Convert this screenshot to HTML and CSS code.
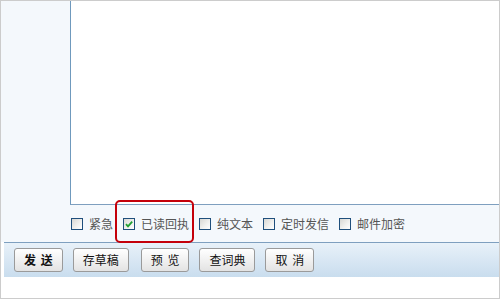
FILE: index.html
```html
<!DOCTYPE html>
<html lang="zh-CN">
<head>
<meta charset="utf-8">
<link rel="stylesheet" href="styles.css">
</head>
<body>
<div class="frame">
  <div class="compose">
    <div class="editor-row">
      <div class="editor"></div>
    </div>
    <div class="options">
      <label class="opt"><span class="box"></span><span class="txt">紧急</span></label>
      <label class="opt"><span class="box checked"><svg viewBox="0 0 12 12" width="12" height="12"><path d="M3 6.2 L5 8.3 L9.2 3.6" fill="none" stroke="#22a033" stroke-width="1.8"/></svg></span><span class="txt">已读回执</span></label>
      <label class="opt"><span class="box"></span><span class="txt">纯文本</span></label>
      <label class="opt"><span class="box"></span><span class="txt">定时发信</span></label>
      <label class="opt"><span class="box"></span><span class="txt">邮件加密</span></label>
    </div>
    <div class="highlight"></div>
  </div>
  <div class="toolbar">
    <button class="btn primary">发 送</button>
    <button class="btn">存草稿</button>
    <button class="btn wide-gap">预 览</button>
    <button class="btn">查词典</button>
    <button class="btn">取 消</button>
  </div>
  <div class="footer"></div>
</div>
</body>
</html>
```

FILE: styles.css
```css
html, body {
  margin: 0;
  padding: 0;
  background: #ffffff;
}
body {
  width: 500px;
  height: 300px;
  overflow: hidden;
  font-family: "Noto Sans CJK SC", "Noto Sans", sans-serif;
}
.frame {
  width: 498px;
  height: 297px;
  border: 1px solid #cccccc;
  display: flex;
  flex-direction: column;
  background: #ffffff;
}
.compose {
  position: relative;
  background: #f4f8fc;
  display: flex;
  flex-direction: column;
}
.editor-row {
  height: 204px;
  padding-left: 69px;
  display: flex;
}
.editor {
  flex: 1;
  background: #ffffff;
  border-left: 1px solid #6f99bd;
  border-bottom: 1px solid #7e9fbf;
}
.options {
  height: 37px;
  padding-left: 70px;
  display: flex;
  align-items: center;
  gap: 10px;
}
.opt {
  display: flex;
  align-items: center;
  gap: 6px;
  font-size: 12px;
  color: #555555;
  line-height: 14px;
}
.box {
  width: 10px;
  height: 10px;
  border: 1px solid #1f4f7c;
  background: linear-gradient(135deg, #d8d8d4 0%, #f2f2f0 60%, #ffffff 100%);
  display: flex;
  align-items: center;
  justify-content: center;
  overflow: hidden;
}
.box svg {
  flex: none;
  margin: -1px;
}
.highlight {
  position: absolute;
  left: 114px;
  top: 199px;
  width: 75px;
  height: 39px;
  border: 2px solid #c4000a;
  border-radius: 5px;
}
.toolbar {
  margin-left: 3px;
  height: 35px;
  box-sizing: border-box;
  border-top: 1px solid #7e9fbf;
  background: linear-gradient(#e8f1f9, #c9ddee);
  display: flex;
  align-items: flex-start;
  padding: 5px 0 0 10px;
  gap: 10px;
}
.btn {
  height: 24px;
  padding: 0 9px;
  border: 1px solid #9a9a9a;
  border-radius: 3px;
  background: linear-gradient(#ffffff, #e3e3e3);
  font-family: "Noto Sans CJK SC", "Noto Sans", sans-serif;
  font-size: 12px;
  color: #111111;
  word-spacing: 2px;
  line-height: 20px;
}
.btn.primary {
  font-weight: bold;
}
.btn.wide-gap {
  margin-left: 2px;
}
.footer {
  flex: 1;
  background: #ffffff;
}
```
